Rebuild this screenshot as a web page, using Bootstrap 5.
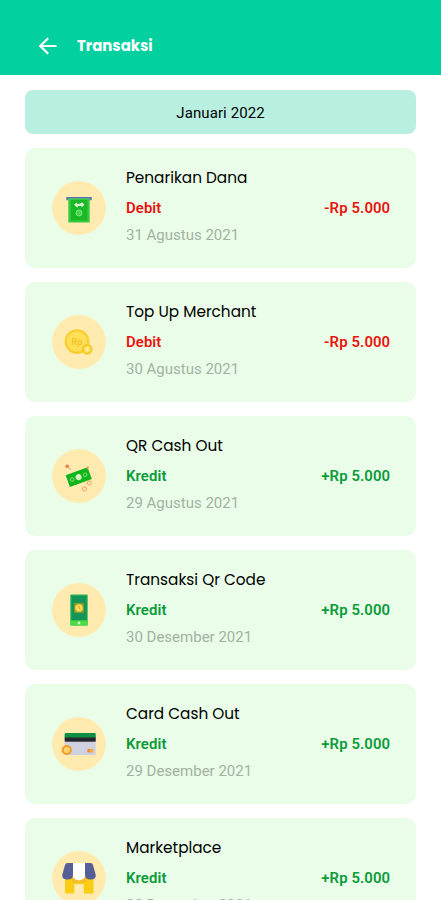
<!DOCTYPE html>
<html lang="id">
<head>
<meta charset="utf-8">
<meta name="viewport" content="width=device-width, initial-scale=1">
<title>Transaksi</title>
<link href="https://cdn.jsdelivr.net/npm/bootstrap@5.3.0/dist/css/bootstrap.min.css" rel="stylesheet">
<style>
html,body{height:900px;overflow:hidden}
body{font-family:Roboto,"Liberation Sans",sans-serif;color:#000;background:#fff}
.topbar{height:74.5px;background:#03d09f;padding:17px 0 0 37px}
.topbar h1{font:700 14.9px/22px Poppins,Inter,sans-serif;margin:0 0 0 19px}
.month{height:44px;border-radius:8px;background:#b9efe1;font-size:15px;letter-spacing:.1px;padding-top:2px}
.screen{padding:15.5px 25.3px 0 25.4px}
.trx{height:119.5px;margin-top:14.5px;border-radius:10px;background:#eafde8;padding:17px 25.5px 0 26.6px}
.month + .trx{margin-top:14px}
.trx-icon{width:54px;height:54px;margin:16px 20px 0 0}
.trx-name{font:400 15.3px/26px Poppins,Inter,sans-serif}
.trx-row{font-size:14.9px;line-height:20px;font-weight:600;margin-top:6.5px;letter-spacing:.1px}
.trx-date{font-size:15px;line-height:20px;color:#a2b2a2;margin-top:7px}
.out{color:#e8150f}
.in{color:#0a9b3a}
</style>
<script src="https://cdn.jsdelivr.net/npm/bootstrap@5.3.0/dist/js/bootstrap.bundle.min.js"></script>
</head>
<body>
<header class="topbar d-flex align-items-center text-white">
<svg width="21" height="20" viewBox="0 0 21 20" fill="none" stroke="#fff" stroke-width="2.2"><path d="M19.5 10H3.5M11.2 2.2 3.3 10l7.9 7.8"/></svg>
<h1>Transaksi</h1>
</header>
<main class="screen">
<div class="month d-flex align-items-center justify-content-center">Januari 2022</div>

<article class="trx d-flex align-items-start">
<svg class="trx-icon flex-shrink-0" viewBox="0 0 54 54"><circle cx="27" cy="27" r="27" fill="#ffebaf"/><path d="M14.3 16h25.4v3.2h-2.2v-1.4h-21v1.4h-2.2z" fill="#5571b8"/><path d="M16.3 17.5h21.4v24H16.3z" fill="#38c93f"/><path d="M18.8 19h16.6v20.5H18.8z" fill="#18b826"/><path d="m22 23.7 3-2.5v1.6h3l2-1.6 2.5 2.5-3 2.8v-1.6h-3l-1.5 1.6z" fill="#d9f5ce"/><circle cx="27" cy="32" r="3" fill="#4cd454" stroke="#7be47b"/></svg>
<div class="flex-grow-1"><div class="trx-name">Penarikan Dana</div><div class="trx-row d-flex justify-content-between out"><span>Debit</span><span>-Rp 5.000</span></div><div class="trx-date">31 Agustus 2021</div></div>
</article>

<article class="trx d-flex align-items-start">
<svg class="trx-icon flex-shrink-0" viewBox="0 0 54 54"><circle cx="27" cy="27" r="27" fill="#ffebaf"/><circle cx="25" cy="26.5" r="11.3" fill="#ffdf58" stroke="#f8cd27" stroke-width="2"/><text x="25" y="30" text-anchor="middle" font-size="9" font-weight="700" fill="#f1c727">Rp</text><circle cx="35.2" cy="34.3" r="4.4" fill="#ffdf58" stroke="#f5c51f" stroke-width="1.8"/><path d="m35.2 31.5 2 2.8-2 2.8-2-2.8z" fill="#fff0a0"/></svg>
<div class="flex-grow-1"><div class="trx-name">Top Up Merchant</div><div class="trx-row d-flex justify-content-between out"><span>Debit</span><span>-Rp 5.000</span></div><div class="trx-date">30 Agustus 2021</div></div>
</article>

<article class="trx d-flex align-items-start">
<svg class="trx-icon flex-shrink-0" viewBox="0 0 54 54"><circle cx="27" cy="27" r="27" fill="#ffebaf"/><g transform="rotate(-20 26.5 28)"><path d="M15 22h23.3v12.5H15z" fill="#10b51e"/><circle cx="26.5" cy="28.2" r="3" fill="#d4f4bd"/><circle cx="19.7" cy="28.2" r="1.8" fill="none" stroke="#7bdc69"/><circle cx="33.4" cy="28.2" r="1.8" fill="none" stroke="#7bdc69"/></g><g fill="none" stroke="#f3a062"><path d="m16 18 3 2.7M34 19l3-1M36 17v4"/><circle cx="37.3" cy="34" r="2"/><circle cx="32.5" cy="40" r="2.1"/></g><circle cx="15.2" cy="17.3" r="1.8" fill="#f17b3e"/></svg>
<div class="flex-grow-1"><div class="trx-name">QR Cash Out</div><div class="trx-row d-flex justify-content-between in"><span>Kredit</span><span>+Rp 5.000</span></div><div class="trx-date">29 Agustus 2021</div></div>
</article>

<article class="trx d-flex align-items-start">
<svg class="trx-icon flex-shrink-0" viewBox="0 0 54 54"><circle cx="27" cy="27" r="27" fill="#ffebaf"/><rect x="18.3" y="11.5" width="17.4" height="31" rx="1" fill="#27ad55"/><path d="M19.6 13h14.8v24H19.6z" fill="#129557"/><path d="M18.3 37.5h17.4v5H18.3z" fill="#4bdb43"/><path d="M22 20h10v10H22z" fill="#789f2e"/><circle cx="27" cy="25" r="3.8" fill="#ffe066" stroke="#e7b92b"/><path d="M27 22.7v2.5l1.3 1" stroke="#c79118" fill="none" stroke-width=".8"/><circle cx="27" cy="40" r="1.4" fill="#d8ffcf"/></svg>
<div class="flex-grow-1"><div class="trx-name">Transaksi Qr Code</div><div class="trx-row d-flex justify-content-between in"><span>Kredit</span><span>+Rp 5.000</span></div><div class="trx-date">30 Desember 2021</div></div>
</article>

<article class="trx d-flex align-items-start">
<svg class="trx-icon flex-shrink-0" viewBox="0 0 54 54"><circle cx="27" cy="27" r="27" fill="#ffebaf"/><rect x="12.7" y="16" width="31" height="22" rx="1.2" fill="#ced2df"/><path d="M13.7 16h29q1 0 1 1v4.2h-31V17q0-1 1-1z" fill="#0e8f43"/><path d="M12.7 20.5h31v4.2h-31z" fill="#28262c"/><circle cx="14.8" cy="33" r="4.1" fill="#ffd36a" stroke="#f39b24" stroke-width="2"/><circle cx="37" cy="33.7" r="2" fill="#ef8a3c"/><circle cx="39.5" cy="33.7" r="2" fill="#f4a93b"/></svg>
<div class="flex-grow-1"><div class="trx-name">Card Cash Out</div><div class="trx-row d-flex justify-content-between in"><span>Kredit</span><span>+Rp 5.000</span></div><div class="trx-date">29 Desember 2021</div></div>
</article>

<article class="trx d-flex align-items-start">
<svg class="trx-icon flex-shrink-0" viewBox="0 0 54 54"><circle cx="27" cy="27" r="27" fill="#ffebaf"/><path d="M13 26h28.500v16.500h-9.700V33H22.300v9.500H13z" fill="#f8cd14"/><path d="M20 27h14v4.500H20z" fill="#f6b92b"/><path d="M13 14Q13.500 12 15.500 12H21V24Q21 28.500 15.500 28.500T10.200 24Z" fill="#565f96"/><path d="M33 12H38.500Q40.500 12 41 14L43.800 24Q44 28.500 38.500 28.500T33 24Z" fill="#565f96"/><path d="M21 12H33V24Q33 28.500 27 29.500Q21 28.500 21 24Z" fill="#fff"/></svg>
<div class="flex-grow-1"><div class="trx-name">Marketplace</div><div class="trx-row d-flex justify-content-between in"><span>Kredit</span><span>+Rp 5.000</span></div><div class="trx-date">28 Desember 2021</div></div>
</article>
</main>
</body>
</html>
